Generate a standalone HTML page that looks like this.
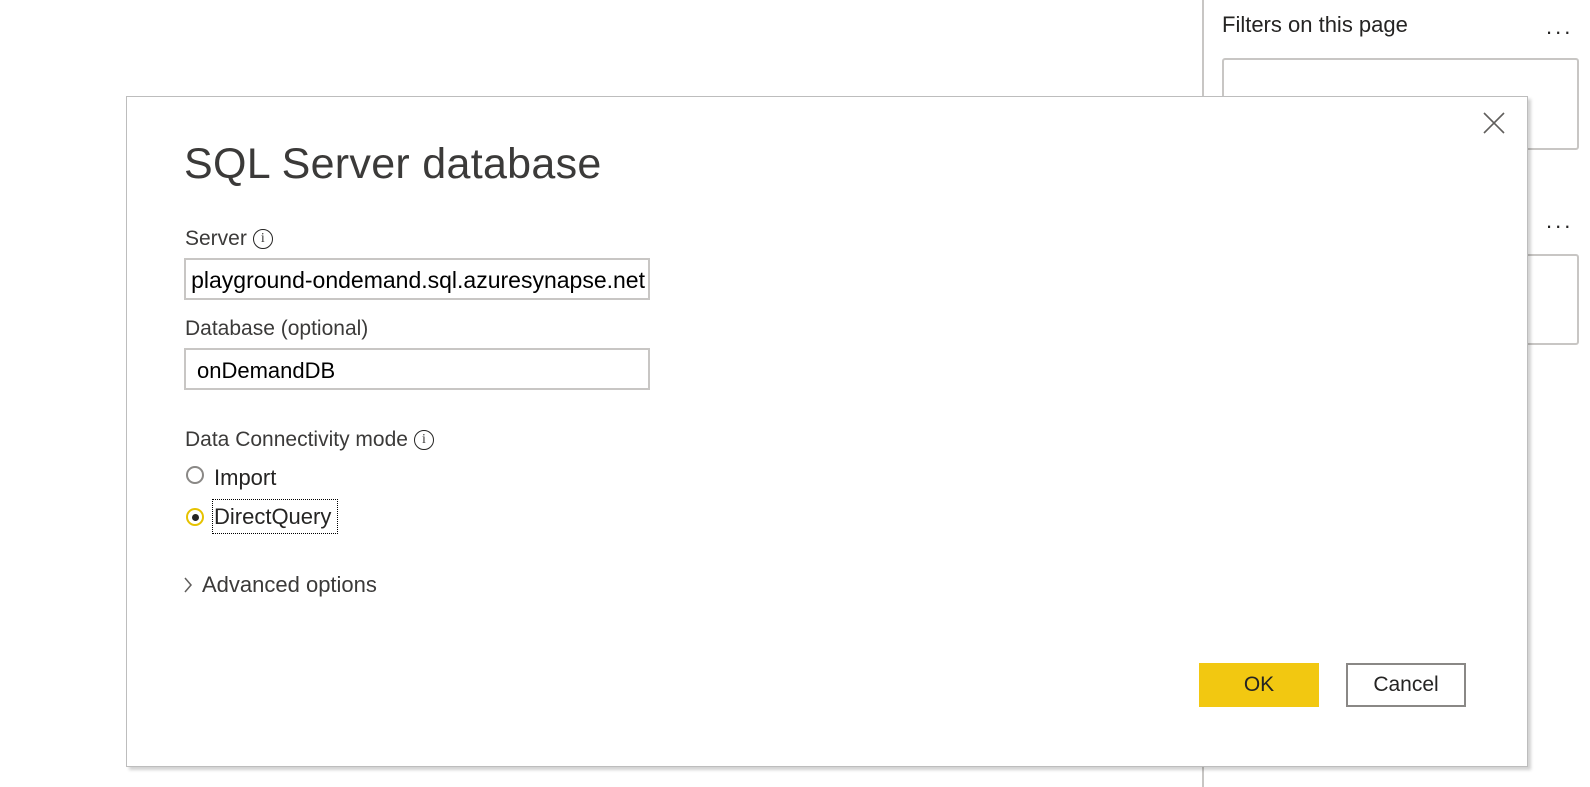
<!DOCTYPE html>
<html><head><meta charset="utf-8"><style>
body{margin:0;width:1590px;height:787px;background:#fff;position:relative;overflow:hidden;font-family:"Liberation Sans",sans-serif;color:#252423}
.a{position:absolute}
.vl{left:1202px;top:0;width:2px;height:787px;background:#c8c6c4}
.box{border:2px solid #c8c6c4;border-radius:3px;background:#fff}
.dots{font-size:22px;letter-spacing:3px;color:#252423}
.dlg{left:126px;top:96px;width:1400px;height:669px;border:1px solid #bdbdbd;background:#fff;box-shadow:3px 3px 3px rgba(0,0,0,.18)}
.lbl{font-size:21px;color:#3b3a39}
.inp{border:2px solid #c8c6c4;background:#fff;font-size:22px;color:#000;overflow:hidden;white-space:nowrap;box-sizing:border-box}
.info{display:inline-block;width:18px;height:18px;border:1.5px solid #252423;border-radius:50%;font-size:14px;text-align:center;line-height:18px;vertical-align:middle;margin-left:6px;font-family:"Liberation Serif",serif}
</style></head><body>
<div class="a vl"></div>
<div class="a" style="left:1222px;top:12px;font-size:22px">Filters on this page</div>
<div class="a dots" style="left:1546px;top:14px">...</div>
<div class="a box" style="left:1222px;top:58px;width:353px;height:88px"></div>
<div class="a dots" style="left:1546px;top:208px">...</div>
<div class="a box" style="left:1222px;top:254px;width:353px;height:87px"></div>

<div class="a dlg"></div>
<svg class="a" style="left:1483px;top:112px" width="22" height="22"><path d="M1 1L21 21M21 1L1 21" stroke="#605e5c" stroke-width="1.6"/></svg>
<div class="a" style="left:184px;top:140px;font-size:43px;color:#3b3a39;letter-spacing:0.3px">SQL Server database</div>
<div class="a lbl" style="left:185px;top:227px">Server<span class="info">i</span></div>
<div class="a inp" style="left:184px;top:258px;width:466px;height:42px"><span class="a" style="right:3px;top:7px;font-size:23px">playground-ondemand.sql.azuresynapse.net</span></div>
<div class="a lbl" style="left:185px;top:317px">Database (optional)</div>
<div class="a inp" style="left:184px;top:348px;width:466px;height:42px;padding:8px 0 0 11px">onDemandDB</div>
<div class="a lbl" style="left:185px;top:428px">Data Connectivity mode<span class="info">i</span></div>
<div class="a" style="left:186px;top:466px;width:14px;height:14px;border:2.5px solid #8a8886;border-radius:50%"></div>
<div class="a lbl" style="left:214px;top:465px;font-size:22px;color:#252423">Import</div>
<div class="a" style="left:186px;top:508px;width:14px;height:14px;border:2.5px solid #e6c200;border-radius:50%"></div>
<div class="a" style="left:192px;top:514px;width:7px;height:7px;background:#252423;border-radius:50%"></div>
<div class="a lbl" style="left:212px;top:499px;width:123px;height:33px;border:1px dotted #000;font-size:22px;color:#252423;line-height:33px;padding-left:1px">DirectQuery</div>
<svg class="a" style="left:183px;top:576px" width="10" height="18"><path d="M2 2L8 9L2 16" fill="none" stroke="#605e5c" stroke-width="1.5"/></svg>
<div class="a lbl" style="left:202px;top:572px;font-size:22px">Advanced options</div>
<div class="a" style="left:1199px;top:663px;width:120px;height:44px;background:#f2c811;font-size:21px;text-align:center;line-height:44px">OK</div>
<div class="a" style="left:1346px;top:663px;width:116px;height:40px;border:2px solid #8a8886;font-size:21px;text-align:center;line-height:40px">Cancel</div>
</body></html>
